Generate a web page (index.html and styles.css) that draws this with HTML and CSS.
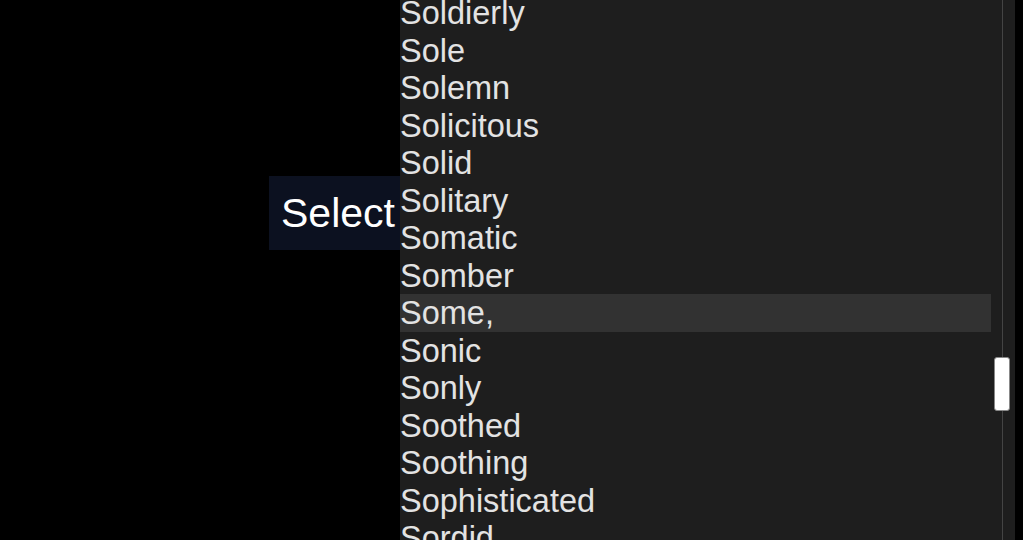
FILE: index.html
```html
<!DOCTYPE html>
<html>
<head>
<meta charset="utf-8">
<link rel="stylesheet" href="styles.css">
</head>
<body>
<div class="page">
  <button class="select-btn">Select</button>
</div>
<div class="dropdown">
  <ul class="options">
    <li>Soldierly</li>
    <li>Sole</li>
    <li>Solemn</li>
    <li>Solicitous</li>
    <li>Solid</li>
    <li>Solitary</li>
    <li>Somatic</li>
    <li>Somber</li>
    <li class="active">Some,</li>
    <li>Sonic</li>
    <li>Sonly</li>
    <li>Soothed</li>
    <li>Soothing</li>
    <li>Sophisticated</li>
    <li>Sordid</li>
  </ul>
  <div class="scrollbar">
    <div class="track"></div>
    <div class="thumb"></div>
  </div>
</div>
</body>
</html>
```

FILE: styles.css
```css
html, body {
  margin: 0;
  padding: 0;
  background: #000;
  width: 1023px;
  height: 540px;
  overflow: hidden;
  font-family: "Liberation Sans", Arial, sans-serif;
}
.page {
  padding: 176px 0 0 269px;
}
.select-btn {
  height: 74px;
  padding: 0 14px 0 12px;
  border: 0;
  background: #0c1120;
  color: #fff;
  font-family: "Liberation Sans", Arial, sans-serif;
  font-size: 41px;
  display: flex;
  align-items: center;
}
.dropdown {
  position: absolute;
  left: 400px;
  top: 0;
  width: 615px;
  height: 540px;
  background: #1e1e1e;
  overflow: hidden;
}
.options {
  list-style: none;
  margin: -6px 0 0 0;
  padding: 0;
  width: 591px;
}
.options li {
  box-sizing: border-box;
  height: 37.5px;
  padding-top: 1px;
  line-height: 36.5px;
  font-size: 32.5px;
  color: #e3e3e3;
  white-space: nowrap;
}
.options li.active {
  background: #323232;
}
.scrollbar {
  position: absolute;
  left: 594px;
  top: 0;
  width: 16px;
  height: 540px;
}
.track {
  position: absolute;
  left: 8px;
  top: 0;
  width: 1px;
  height: 540px;
  background: #444;
}
.thumb {
  position: absolute;
  left: 0;
  top: 357px;
  width: 14px;
  height: 52px;
  background: #fff;
  border: 1px solid #888;
  border-radius: 3px;
}
```
